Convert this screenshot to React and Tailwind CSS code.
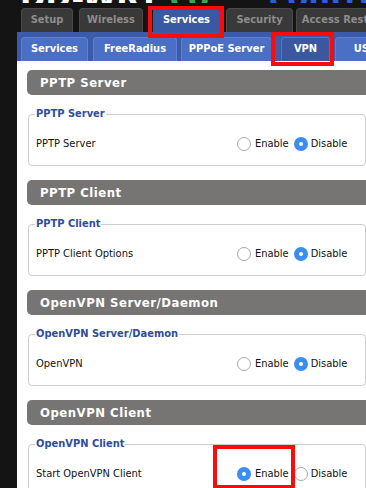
import React from 'react';

const font = { fontFamily: '"DejaVu Sans Condensed", "DejaVu Sans", Tahoma, sans-serif' };

function Radio({ checked }) {
  if (checked) {
    return (
      <span className="w-[14px] h-[14px] rounded-full bg-[#3a8ef3] flex items-center justify-center shrink-0">
        <span className="w-[4px] h-[4px] rounded-full bg-white" />
      </span>
    );
  }
  return <span className="block w-[14px] h-[14px] rounded-full bg-white border border-[#a9a9a9] shrink-0" />;
}

function Section({ title, legend, label, enabled, highlight }) {
  return (
    <div className="mb-[14px]">
      <div className="h-[25px] bg-[#777573] rounded-l-[5px] flex items-center pl-[13px] text-white font-bold text-[13px] tracking-[0.5px]">
        {title}
      </div>
      <fieldset className="mt-[12px] ml-[1px] border border-[#cccccc] rounded-[4px] pl-[7px] pt-[13px] pb-[11px]">
        <legend className="text-[#2f4d9d] font-bold text-[11px] leading-[14px] px-[1px] -ml-[1px]">{legend}</legend>
        <div className="h-[20px] flex items-center text-[11px] text-[#111]">
          <span className="w-[201px]">{label}</span>
          <div className="relative flex items-center">
            <Radio checked={enabled} />
            <span className="ml-[4px]">Enable</span>
            <span className="ml-[5px] flex"><Radio checked={!enabled} /></span>
            <span className="ml-[3px]">Disable</span>
            {highlight && (
              <div className="absolute left-[-24px] top-[-21px] w-[82px] h-[44px] border-[4px] border-[#ff0a0a]" />
            )}
          </div>
        </div>
      </fieldset>
    </div>
  );
}

function TopTab({ children, active, w }) {
  return (
    <div
      className={
        (active
          ? 'h-[24px] rounded-t-[4px] bg-[#3b58a5] text-white flex items-center justify-center font-bold text-[11px] shrink-0 '
          : 'h-[24px] rounded-t-[4px] bg-[#393939] border-t border-x border-[#4a4a4a] text-[#8d8d8d] flex items-center justify-center font-bold text-[11px] shrink-0 ') + w
      }
    >
      {children}
    </div>
  );
}

function SubTab({ children, active, w }) {
  return (
    <div
      className={
        (active
          ? 'h-[24px] rounded-t-[4px] bg-[#3a579f] border-t border-x border-[#5673bd] text-white flex items-center justify-center font-bold text-[11px] shrink-0 '
          : 'h-[24px] rounded-t-[4px] bg-[#4a6fc4] border-t border-x border-[#5d82d4] text-white flex items-center justify-center font-bold text-[11px] shrink-0 ') + w
      }
    >
      {children}
    </div>
  );
}

export default function App() {
  return (
    <div className="w-[366px] h-[488px] overflow-hidden bg-[#141414] relative" style={font}>
      {/* cut-off logo strip */}
      <div className="h-[3px] mb-[5px] overflow-hidden whitespace-nowrap relative">
        <div className="absolute left-[20px] bottom-[-6px] text-[34px] font-bold leading-[24px] h-[24px]">
          <span className="text-white">DD-WRT</span>
          <span className="text-[#3aa35a]"> co</span>
          <span className="text-[#2b5fd9] ml-[60px]">control panel</span>
        </div>
      </div>

      {/* top tabs */}
      <div className="flex items-end pl-[21px] h-[24px] whitespace-nowrap">
        <TopTab w="w-[52px]">Setup</TopTab>
        <div className="ml-[6px]"><TopTab w="w-[64px]">Wireless</TopTab></div>
        <div className="ml-[10px]"><TopTab active w="w-[67px]">Services</TopTab></div>
        <div className="ml-[6px]"><TopTab w="w-[67px]">Security</TopTab></div>
        <div className="ml-[3px]"><TopTab w="w-[120px]">Access Restrictions</TopTab></div>
      </div>

      {/* sub tabs */}
      <div className="ml-[17px] bg-[#3c5cab] h-[29px] flex items-end pl-[4px] whitespace-nowrap">
        <SubTab w="w-[67px]">Services</SubTab>
        <div className="ml-[5px]"><SubTab w="w-[84px]">FreeRadius</SubTab></div>
        <div className="ml-[4px]"><SubTab w="w-[91px]">PPPoE Server</SubTab></div>
        <div className="ml-[9px]"><SubTab active w="w-[49px]">VPN</SubTab></div>
        <div className="ml-[5px]"><SubTab w="w-[60px]">USB</SubTab></div>
      </div>

      {/* content */}
      <div className="ml-[17px] bg-white h-[440px] pl-[10px] pt-[9px]">
        <Section title="PPTP Server" legend="PPTP Server" label="PPTP Server" enabled={false} />
        <Section title="PPTP Client" legend="PPTP Client" label="PPTP Client Options" enabled={false} />
        <Section title="OpenVPN Server/Daemon" legend="OpenVPN Server/Daemon" label="OpenVPN" enabled={false} />
        <Section title="OpenVPN Client" legend="OpenVPN Client" label="Start OpenVPN Client" enabled highlight />
      </div>

      {/* annotation boxes */}
      <div className="absolute left-[148px] top-[6px] w-[76px] h-[32px] border-[4px] border-[#ff0a0a]" />
      <div className="absolute left-[271px] top-[32px] w-[63px] h-[34px] border-[4px] border-[#ff0a0a]" />
    </div>
  );
}
